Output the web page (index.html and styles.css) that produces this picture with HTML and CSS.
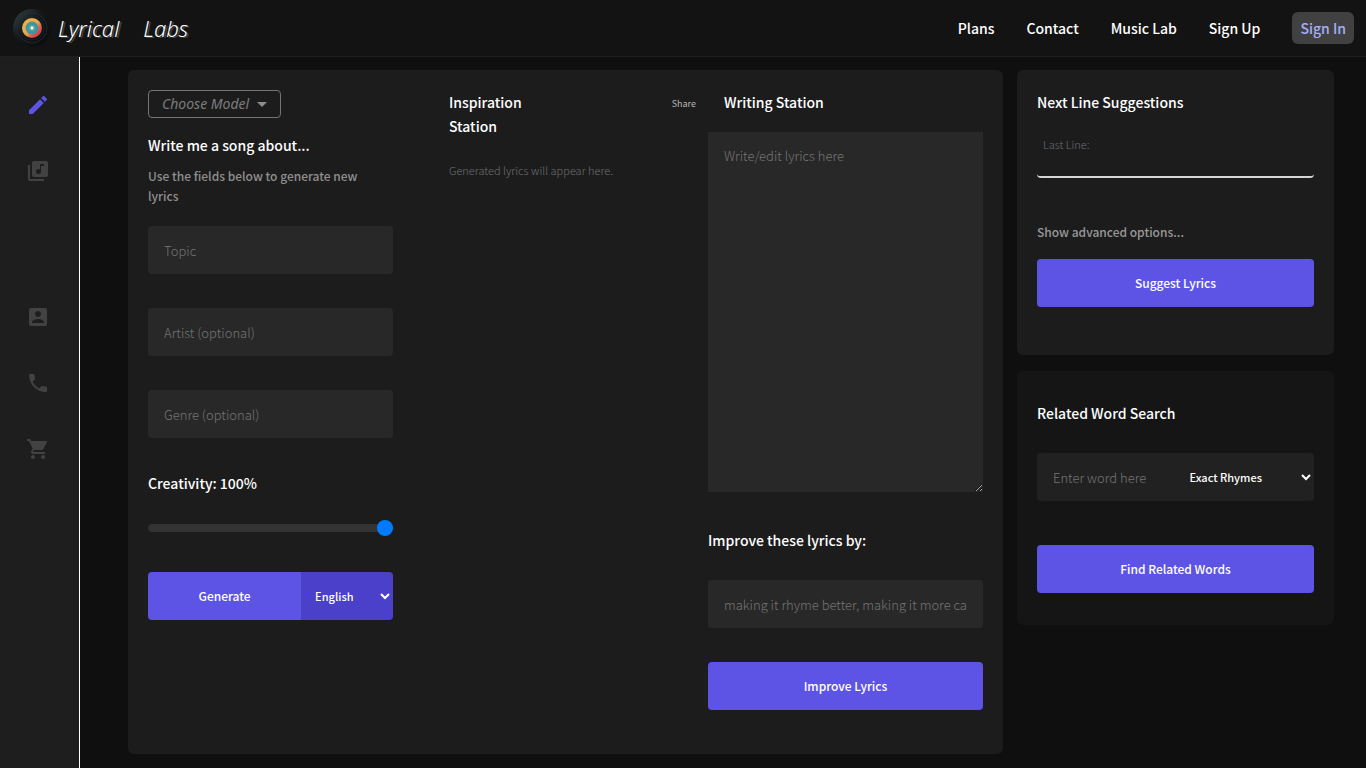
FILE: index.html
```html
<!DOCTYPE html>
<html lang="en">
<head>
<meta charset="utf-8">
<meta name="viewport" content="width=device-width, initial-scale=1">
<title>Lyrical Labs</title>
<link rel="stylesheet" href="styles.css">
</head>
<body>
<header class="topbar">
  <a class="brand" href="#" aria-label="Lyrical Labs home">
    <svg class="brand-disc" viewBox="0 0 40 40" aria-hidden="true">
      <defs>
        <linearGradient id="vinyl" x1="0" y1="0" x2="1" y2="1"><stop offset="0" stop-color="#35464a"/><stop offset=".4" stop-color="#15191b"/><stop offset="1" stop-color="#08080a"/></linearGradient>
        <linearGradient id="ring" x1="0" y1="0" x2="1" y2="1"><stop offset="0" stop-color="#e9b44d"/><stop offset=".5" stop-color="#e9a84c"/><stop offset=".7" stop-color="#e0524a"/><stop offset="1" stop-color="#b8344a"/></linearGradient>
      </defs>
      <circle cx="20" cy="20" r="19" fill="url(#vinyl)"/>
      <circle cx="20" cy="20" r="15" fill="none" stroke="#27383b" stroke-width=".6"/>
      <circle cx="20" cy="20" r="12" fill="none" stroke="#202b30" stroke-width=".6"/>
      <circle cx="20" cy="20" r="10" fill="url(#ring)"/>
      <circle cx="20" cy="20" r="6.4" fill="#3d97a0"/>
      <circle cx="20" cy="20" r="3" fill="#6ba89a"/>
      <circle cx="20" cy="20" r="1.4" fill="#fff"/>
    </svg>
    <span class="brand-name"><span>Lyrical</span> <span>Labs</span></span>
  </a>
  <nav class="topnav" aria-label="Main">
    <a href="#">Plans</a>
    <a href="#">Contact</a>
    <a href="#">Music Lab</a>
    <a href="#">Sign Up</a>
    <a class="sign-in" href="#">Sign In</a>
  </nav>
</header>
<div class="shell">
  <nav class="sidebar" aria-label="Tools">
    <a class="active" href="#" aria-label="Write"><svg viewBox="0 0 24 24"><path d="M3 17.25V21h3.75L17.81 9.94l-3.75-3.75L3 17.25zM20.71 7.04a1 1 0 0 0 0-1.41l-2.34-2.34a1 1 0 0 0-1.41 0l-1.83 1.83 3.75 3.75 1.83-1.83z"/></svg></a>
    <a href="#" aria-label="Library"><svg viewBox="0 0 24 24"><path d="M20 2H8c-1.100 0-2 .9-2 2v12c0 1.100.9 2 2 2h12c1.100 0 2-.9 2-2V4c0-1.100-.9-2-2-2zm-2 5h-3v5.500a2.500 2.500 0 1 1-2.500-2.500c.57 0 1.080.19 1.500.51V5h4v2zM4 6H2v14c0 1.100.9 2 2 2h14v-2H4V6z"/></svg></a>
    <a class="group-start" href="#" aria-label="Account"><svg viewBox="0 0 24 24"><path d="M3 5v14c0 1.100.89 2 2 2h14c1.100 0 2-.9 2-2V5c0-1.100-.9-2-2-2H5c-1.110 0-2 .9-2 2zm12 4c0 1.660-1.340 3-3 3s-3-1.340-3-3 1.340-3 3-3 3 1.340 3 3zm-9 8c0-2 4-3.100 6-3.100s6 1.100 6 3.100v1H6v-1z"/></svg></a>
    <a href="#" aria-label="Call"><svg viewBox="0 0 24 24"><path d="M6.620 10.790c1.440 2.830 3.760 5.140 6.590 6.590l2.200-2.200c.27-.27.67-.36 1.020-.24 1.120.37 2.330.57 3.570.57.55 0 1 .45 1 1V20c0 .55-.45 1-1 1-9.390 0-17-7.610-17-17 0-.55.45-1 1-1h3.500c.55 0 1 .45 1 1 0 1.250.2 2.450.57 3.570.11.35.03.74-.25 1.020l-2.200 2.200z"/></svg></a>
    <a href="#" aria-label="Cart"><svg viewBox="0 0 24 24"><path d="M7 18c-1.100 0-1.990.9-1.990 2S5.900 22 7 22s2-.9 2-2-.9-2-2-2zM1 2v2h2l3.600 7.590-1.350 2.450c-.16.28-.25.61-.25.96 0 1.100.9 2 2 2h12v-2H7.420c-.14 0-.25-.11-.25-.25l.03-.12.9-1.630h7.450c.75 0 1.410-.41 1.750-1.030l3.580-6.490A1 1 0 0 0 20 4H5.210l-.94-2H1zm16 16c-1.100 0-1.990.9-1.990 2s.89 2 1.990 2 2-.9 2-2-.9-2-2-2z"/></svg></a>
  </nav>
  <main class="workspace">
    <section class="card studio">
      <form class="generator">
        <button class="model" type="button">Choose Model <svg viewBox="0 0 10 5" aria-hidden="true"><path d="M0 0h10L5 5z"/></svg></button>
        <h2>Write me a song about...</h2>
        <p class="hint">Use the fields below to generate new lyrics</p>
        <div class="fields">
          <input class="field" type="text" placeholder="Topic" aria-label="Topic">
          <input class="field" type="text" placeholder="Artist (optional)" aria-label="Artist">
          <input class="field" type="text" placeholder="Genre (optional)" aria-label="Genre">
        </div>
        <label class="title" for="creativity">Creativity: 100%</label>
        <input class="slider" id="creativity" type="range" min="0" max="100" value="100">
        <div class="split">
          <button class="primary" type="button">Generate</button>
          <select class="language" aria-label="Language"><option>English</option><option>Spanish</option></select>
        </div>
      </form>
      <section class="inspiration">
        <div class="inspiration-head">
          <h2>Inspiration Station</h2>
          <button class="share" type="button">Share</button>
        </div>
        <p class="empty">Generated lyrics will appear here.</p>
      </section>
      <section class="writing">
        <h2 class="inset"><label for="lyrics">Writing Station</label></h2>
        <textarea class="editor" id="lyrics" placeholder="Write/edit lyrics here"></textarea>
        <label class="title" for="improve">Improve these lyrics by:</label>
        <input class="field" id="improve" type="text" placeholder="making it rhyme better, making it more catchy">
        <button class="primary" type="button">Improve Lyrics</button>
      </section>
    </section>
    <aside class="tools">
      <section class="card suggestions">
        <h2>Next Line Suggestions</h2>
        <div class="last-line">
          <label for="last-line">Last Line:</label>
          <input id="last-line" type="text">
        </div>
        <button class="advanced" type="button">Show advanced options...</button>
        <button class="primary" type="button">Suggest Lyrics</button>
      </section>
      <section class="card related">
        <h2>Related Word Search</h2>
        <div class="word-row">
          <input class="field" type="text" placeholder="Enter word here" aria-label="Word">
          <select class="relation" aria-label="Relation"><option>Exact Rhymes</option><option>Synonyms</option></select>
        </div>
        <button class="primary" type="button">Find Related Words</button>
      </section>
    </aside>
  </main>
</div>
</body>
</html>
```
FILE: styles.css
```css
* { box-sizing: border-box; }

body {
  margin: 0;
  min-height: 100vh;
  display: flex;
  flex-direction: column;
  background: #0f0f0f;
  color: #fff;
  font-family: "Noto Sans CJK JP", "Noto Sans", sans-serif;
  font-size: 14px;
  line-height: 24px;
}

a { color: inherit; text-decoration: none; }
h2, p { margin: 0; }
button, input, select, textarea { font: inherit; color: inherit; border: 0; margin: 0; }
button { cursor: pointer; }

h2, .title, .topnav {
  font-size: 14px;
  font-weight: 500;
  line-height: 24px;
}

.topbar {
  display: flex;
  align-items: center;
  justify-content: space-between;
  height: 57px;
  padding: 0 12px;
  background: #131313;
  border-bottom: 1px solid #202020;
}

.brand { display: flex; align-items: center; gap: 6px; }
.brand-disc { width: 40px; height: 40px; }
.brand-name {
  display: flex;
  gap: 24px;
  font-family: "Noto Sans", sans-serif;
  font-size: 22px;
  font-style: italic;
  font-weight: 300;
  text-shadow: 2px 1px 0 #444;
}

.topnav { display: flex; align-items: center; gap: 32px; }
.sign-in { padding: 4px 8px; border-radius: 6px; background: #414141; color: #a5b0f5; }

.shell { flex: 1; display: flex; }

.sidebar {
  display: flex;
  flex-direction: column;
  align-items: center;
  gap: 42px;
  width: 80px;
  padding: 36px 4px 0 0;
  background: #1e1e1e;
  border-right: 1px solid #fff;
  color: #424242;
}
.sidebar a, .sidebar svg { display: block; width: 24px; height: 24px; }
.sidebar svg { fill: currentColor; }
.sidebar .active { color: #5d54e6; }
.sidebar .group-start { margin-top: 80px; }

.workspace {
  flex: 1;
  display: grid;
  grid-template-columns: 276fr 100fr;
  align-items: start;
  gap: 14px;
  padding: 13px 32px 14px 48px;
}

.card { padding: 20px; border-radius: 6px; background: #1c1c1c; }

.studio {
  display: grid;
  grid-template-columns: 245fr 291fr 275fr;
  gap: 12px;
  padding-bottom: 44px;
}
.studio > *, .tools > * { min-width: 0; }

.generator, .writing, .tools, .suggestions, .related { display: flex; flex-direction: column; }

.model {
  display: flex;
  align-items: center;
  align-self: flex-start;
  gap: 8px;
  height: 28px;
  margin-bottom: 15px;
  padding: 0 13px;
  border: 1px solid #757575;
  border-radius: 4px;
  background: transparent;
  color: #7c7c7c;
  font-family: "Noto Sans", sans-serif;
  font-size: 14px;
  font-style: italic;
}
.model svg { width: 10px; height: 5px; fill: #8c8c8c; }

.hint { width: 90%; margin: 9px 0 20px; color: #8f8f8f; font-size: 12px; font-weight: 500; line-height: 20px; }
.fields { display: grid; gap: 34px; margin-bottom: 33px; }

.field {
  width: 100%;
  min-width: 0;
  height: 48px;
  padding: 0 16px;
  border-radius: 4px;
  background: #282828;
  font-size: 13px;
  font-weight: 300;
}
::placeholder { color: #757575; opacity: 1; }

.slider {
  appearance: none;
  width: 100%;
  height: 8px;
  margin: 29px 0 40px;
  border-radius: 4px;
  background: #333;
}
.slider::-webkit-slider-thumb {
  appearance: none;
  width: 16px;
  height: 16px;
  border-radius: 50%;
  background: #007bff;
}

.primary {
  height: 48px;
  padding: 0 16px;
  border-radius: 4px;
  background: #5d54e6;
  font-size: 12px;
  font-weight: 500;
}

.split { display: grid; grid-template-columns: 5fr 3fr; border-radius: 4px; overflow: hidden; }
.split .primary { border-radius: 0; }
.language, .relation { min-width: 0; height: 48px; padding: 0 0 0 10px; font-size: 11px; font-weight: 500; }
.language { background: #4b40c9; }

.inspiration { padding-left: 44px; }
.inspiration-head { display: flex; align-items: flex-start; justify-content: space-between; }
.inspiration-head h2 { width: 45%; }
.share { padding: 0; background: transparent; color: #b5b5b5; font-size: 9px; line-height: 28px; }
.empty { margin-top: 20px; color: #707070; font-size: 11px; font-weight: 300; }

.inset { padding: 0 16px; }
.editor {
  height: 360px;
  margin: 18px 0 36px;
  padding: 12px 16px;
  background: #282828;
  font-size: 13px;
  font-weight: 300;
  resize: vertical;
}
.writing .field { margin: 28px 0 34px; }

.tools { gap: 16px; }
.suggestions { padding-bottom: 48px; }
.last-line {
  display: flex;
  flex-direction: column;
  height: 46px;
  margin: 18px 0 42px;
  padding: 0 6px;
  border-bottom: 2px solid #d5d5d5;
  border-radius: 4px;
}
.last-line label { color: #6c6c74; font-size: 11px; font-weight: 300; line-height: 24px; }
.last-line input { height: 20px; padding: 0; background: transparent; outline: 0; font-size: 12px; }
.advanced {
  align-self: flex-start;
  margin-bottom: 15px;
  padding: 0;
  background: transparent;
  color: #989898;
  font-size: 12px;
  font-weight: 500;
}

.related { padding: 30px 20px 32px; background: #151515; }
.word-row {
  display: grid;
  grid-template-columns: 1fr 1fr;
  margin: 28px 0 44px;
  border-radius: 4px;
  background: #212121;
}
.word-row .field, .relation { background: transparent; }
.relation option { background: #212121; }
```
